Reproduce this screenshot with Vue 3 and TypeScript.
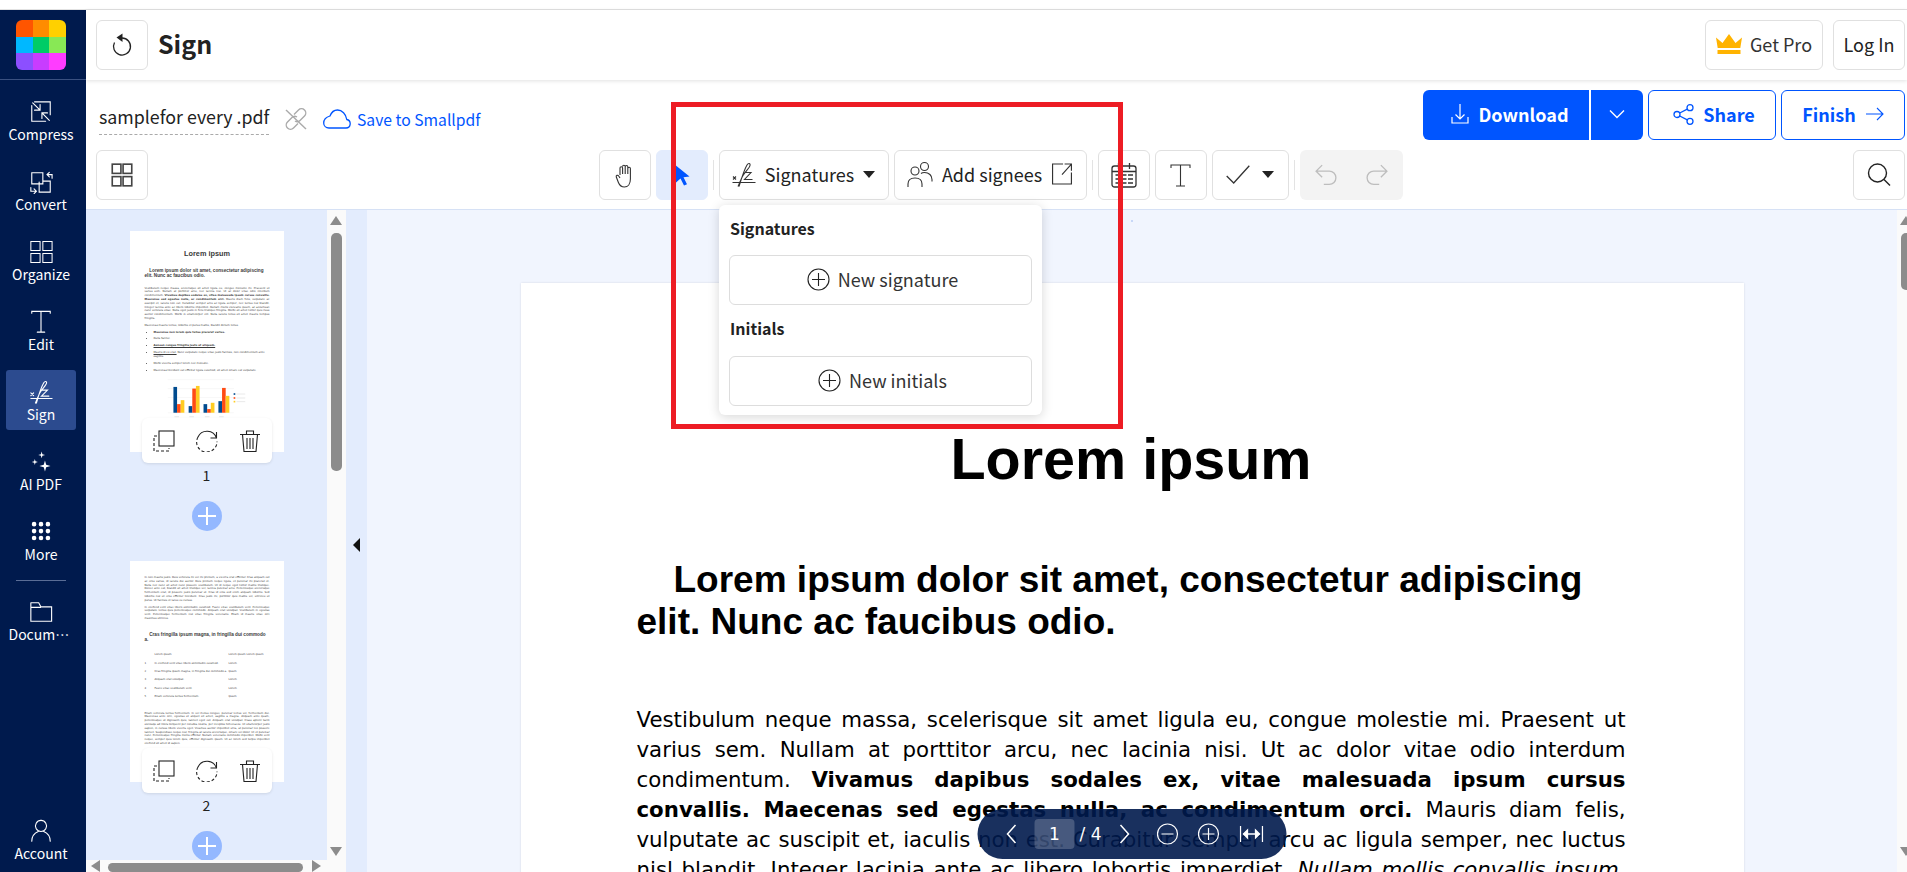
<template>
  <div class="app">
    <aside class="rail">
      <div class="logo-wrap">
        <div class="logo">
          <span v-for="c in logoColors" :key="c" :style="{ background: c }"></span>
        </div>
      </div>
      <nav class="rail-nav">
        <template v-for="item in railItems" :key="item.label">
          <div v-if="item.label === 'Documents'" class="rail-sep"></div>
          <div class="rail-item" :class="{ active: item.label === 'Sign', account: item.label === 'Account' }">
            <svg width="24" height="24" viewBox="0 0 24 26" fill="none" stroke="#fff" :stroke-width="item.sw || 1.2">
              <path :d="item.d" :fill="item.fill ? '#fff' : 'none'" :stroke="item.fill ? 'none' : '#fff'" stroke-linecap="round" />
            </svg>
            <span class="rail-label" :class="{ clipped: item.label === 'Documents' }">{{ item.label }}</span>
          </div>
        </template>
      </nav>
    </aside>

    <div class="main">
      <header class="header">
        <button class="btn square">
          <svg width="24" height="24" viewBox="0 0 24 24" fill="none" stroke="#222" stroke-width="1.300">
            <path d="M12 5a8.500 8.500 0 1 1-7.500 4.500" />
            <path d="M12.500.5 6.500 4.500l6 4.500z" fill="#222" stroke="none" />
          </svg>
        </button>
        <h1 class="title">Sign</h1>
        <div class="spacer"></div>
        <button class="btn pro">
          <svg width="26" height="20" viewBox="0 0 26 20" fill="#ffb300">
            <path d="M0 3.5 6.5 9 13 0l6.500 9L26 3.500 24.300 14H1.700z" />
            <rect x="1.500" y="16" width="23" height="4" />
          </svg>
          Get Pro
        </button>
        <button class="btn login">Log In</button>
      </header>

      <div class="actions">
        <span class="filename">samplefor every .pdf</span>
        <svg class="unlink" width="24" height="24" viewBox="0 0 24 24" fill="none" stroke="#aaa" stroke-width="1.400">
          <path d="M10 7.500 14.500 3a4 4 0 0 1 6 6l-4.500 4.500a4 4 0 0 1-5 .5" />
          <path d="M14 16.500 9.500 21a4 4 0 0 1-6-6L8 10.500a4 4 0 0 1 5-.5" />
          <path d="M2 3l20 19" />
        </svg>
        <svg class="cloud" width="28" height="20" viewBox="0 0 28 20" fill="none" stroke="#0055ff" stroke-width="1.300">
          <path d="M6 19h17a4.300 4.300 0 0 0 .8-8.500C23 5 19 1 14.500 1 11 1 8.500 3 7 7 3.500 8 .7 10.500.7 14c0 3 2.300 5 5.300 5z" />
        </svg>
        <span class="save">Save to Smallpdf</span>
        <div class="spacer"></div>
        <button class="btn primary download">
          <svg width="18" height="20" viewBox="0 0 18 20" fill="none" stroke="#fff" stroke-width="1.200">
            <path d="M9 0v15M4.500 10.500 9 15l4.500-4.500M1 13v6h16v-6" />
          </svg>
          Download
        </button>
        <button class="btn primary caret-btn">
          <svg width="16" height="10" viewBox="0 0 16 10" fill="none" stroke="#fff" stroke-width="1.400"><path d="m1 1.500 7 7 7-7" /></svg>
        </button>
        <button class="btn outline share">
          <svg width="21" height="21" viewBox="0 0 21 21" fill="none" stroke="#0055ff" stroke-width="1.300">
            <circle cx="4" cy="10.500" r="3" /><circle cx="17" cy="3.700" r="3" /><circle cx="17" cy="17.300" r="3" />
            <path d="m6.700 9 7.600-3.900M6.700 12l7.600 3.900" />
          </svg>
          Share
        </button>
        <button class="btn outline finish">
          Finish
          <svg width="18" height="14" viewBox="0 0 18 14" fill="none" stroke="#0055ff" stroke-width="1.100"><path d="M0 7h17M11 1l6 6-6 6" /></svg>
        </button>
      </div>

      <div class="toolbar">
        <button class="btn square">
          <svg width="22" height="26" viewBox="0 0 20 24" fill="none" stroke="#444" stroke-width="1.500">
            <rect x="1" y="2" width="8" height="8.500" /><rect x="11" y="2" width="8" height="8.500" />
            <rect x="1" y="13.500" width="8" height="8.500" /><rect x="11" y="13.500" width="8" height="8.500" />
          </svg>
        </button>
        <div class="tools">
          <button class="btn square">
            <svg width="20" height="25" viewBox="0 0 20 25" fill="none" stroke="#333" stroke-width="1.100">
              <path d="M5 12V5a1.300 1.300 0 0 1 2.600 0v6M7.600 3.500a1.300 1.300 0 0 1 2.600 0V11M10.200 3.800a1.300 1.300 0 0 1 2.600 0V11M12.800 5.500a1.300 1.300 0 0 1 2.600 0V16c0 5-2.500 8-6 8-3 0-4.800-1.500-6-4.500L1.300 14c-.6-1.500 1.500-2.500 2.400-1L5 15" />
            </svg>
          </button>
          <button class="btn square selected">
            <svg width="16" height="22" viewBox="0 0 16 22" fill="#0055ff"><path d="M0 0l15.500 12.500-6 .8 3.500 7-3 1.200-3.500-7L1.500 19z" /></svg>
          </button>
          <i class="tool-sep"></i>
          <button class="btn sigs">
            <svg width="24" height="25" viewBox="0 0 24 25" fill="none" stroke="#333" stroke-width="1.100">
              <path d="M1 14.500l3 3M4 14.500l-3 3M.5 20.500H23.500" />
              <path d="M7 24.500C9 18 12 8 15 3c1.200-2 3.500-2 3 .5-.5 2.500-5 6.500-7 10-1.500 2.500-3.500 7.500-5 11M13 10.500h6l-6.500 7h8" />
            </svg>
            Signatures
            <i class="tri"></i>
          </button>
          <button class="btn signees">
            <svg width="26" height="26" viewBox="0 0 26 26" fill="none" stroke="#333" stroke-width="1.100">
              <circle cx="8" cy="10" r="4" /><circle cx="17.500" cy="5.500" r="4" />
              <path d="M1 26v-3c0-4 3-6 7-6s7 2 7 6v3M14 12.500c1-.8 2-1 3.500-1 4.500 0 7.500 3 7.500 7v2" />
            </svg>
            Add signees
            <svg width="22" height="22" viewBox="0 0 20 21" fill="none" stroke="#333" stroke-width="1.100">
              <path d="M11 1H1v19h18V9M10 11l9-10M12.500 1H19v6.500" />
            </svg>
          </button>
          <i class="tool-sep"></i>
          <button class="btn square">
            <svg width="26" height="26" viewBox="0 0 26 26" fill="none" stroke="#333" stroke-width="1.300">
              <rect x="1" y="4" width="24" height="21" rx="2.500" />
              <path d="M7.500 1v6M18.500 1v6M1 9.500h24" />
              <path d="M4.500 13h5M11 13h4.500M17 13h5M4.500 17h5M11 17h4.500M17 17h5M4.500 21h5M11 21h4.500M17 21h5" stroke-width="1.700" />
            </svg>
          </button>
          <button class="btn square">
            <svg width="21" height="23" viewBox="0 0 21 23" fill="none" stroke="#333" stroke-width="1.100"><path d="M1 4V1h19v3M10.500 1v21M6 22h9" /></svg>
          </button>
          <button class="btn check">
            <svg width="24" height="19" viewBox="0 0 24 19" fill="none" stroke="#333" stroke-width="1.300"><path d="m.7 11 7 7L23.300.7" /></svg>
            <i class="tri"></i>
          </button>
          <i class="tool-sep"></i>
          <div class="history">
            <svg width="22" height="22" viewBox="0 0 20 20" fill="none" stroke="#bdbdbd" stroke-width="1.200"><path d="M6.500 1 1 6.500 6.500 12M1 6.500h12a6 6 0 0 1 0 12H8" /></svg>
            <svg width="22" height="22" viewBox="0 0 20 20" fill="none" stroke="#bdbdbd" stroke-width="1.200"><path d="M13.500 1 19 6.500 13.500 12M19 6.500H7a6 6 0 0 0 0 12h5" /></svg>
          </div>
        </div>
        <button class="btn square">
          <svg width="24" height="24" viewBox="0 0 24 24" fill="none" stroke="#222" stroke-width="1.400"><circle cx="10.500" cy="10" r="9" /><path d="m17 16.500 6 6" /></svg>
        </button>
      </div>

      <div class="workspace">
        <div class="thumbs">
          <div class="thumb-list">
            <div class="thumb-item">
              <div class="thumb">
                <div class="t-title">Lorem ipsum</div>
                <div class="t-h2"><span class="t-indent"></span>Lorem ipsum dolor sit amet, consectetur adipiscing elit. Nunc ac faucibus odio.</div>
                <p class="t-p t-first">Vestibulum neque massa, scelerisque sit amet ligula eu, congue molestie mi. Praesent ut varius sem. Nullam at porttitor arcu, nec lacinia nisi. Ut ac dolor vitae odio interdum condimentum. <b>Vivamus dapibus sodales ex, vitae malesuada ipsum cursus convallis. Maecenas sed egestas nulla, ac condimentum orci.</b> Mauris diam felis, vulputate ac suscipit et, iaculis non est. Curabitur semper arcu ac ligula semper, nec luctus nisl blandit. Integer lacinia ante ac libero lobortis imperdiet. <em>Nullam mollis convallis ipsum, ac accumsan nunc vehicula vitae.</em> Nulla eget justo in felis tristique fringilla. Morbi sit amet tortor quis risus auctor condimentum. Morbi in ullamcorper elit. Nulla iaculis tellus sit amet mauris tempus fringilla.</p>
                <p class="t-p">Maecenas mauris lectus, lobortis et purus mattis, blandit dictum tellus.</p>
                <ul class="t-list">
                  <li><b>Maecenas non lorem quis tellus placerat varius.</b></li>
                  <li><em>Nulla facilisi.</em></li>
                  <li><b><u>Aenean congue fringilla justo ut aliquam.</u></b></li>
                  <li><u>Mauris id ex erat.</u> Nunc vulputate neque vitae justo facilisis, non condimentum ante sagittis.</li>
                  <li>Morbi viverra semper lorem nec molestie.</li>
                  <li>Maecenas tincidunt est efficitur ligula euismod, sit amet ornare est vulputate.</li>
                </ul>
                <svg class="t-chart" width="87" height="43" viewBox="140 470 260 130">
                  <path d="M150 478h200M150 505h200M150 532h200M150 578h200" stroke="#f1f1f1" stroke-width="1.500" />
                  <template v-for="g in chartBars" :key="g.x">
                    <rect :x="g.x" :y="g.b" width="11" :height="578 - g.b" fill="#004b8f" />
                    <rect :x="g.x + 11" :y="g.o" width="11" :height="578 - g.o" fill="#ff4b14" />
                    <rect :x="g.x + 22" :y="g.y" width="11" :height="578 - g.y" fill="#ffcc22" />
                  </template>
                  <rect x="349" y="519" width="5" height="5" fill="#004b8f" /><rect x="349" y="531" width="5" height="5" fill="#ff4b14" /><rect x="349" y="542" width="5" height="5" fill="#ffcc22" />
                  <path d="M358 521.500h26M358 533.500h26M358 544.500h26M170 590h14M215 590h14M262 590h14M305 590h14" stroke="#ddd" stroke-width="2" />
                </svg>
                <div class="t-card">
                  <svg width="22" height="22" viewBox="0 0 22 22" fill="none" stroke="#222" stroke-width="1.100"><rect x="6" y="1" width="15" height="15" /><path d="M4 6H1v15h15v-3" stroke-dasharray="3 2" /></svg>
                  <svg width="22" height="22" viewBox="0 0 22 22" fill="none" stroke="#222" stroke-width="1.100"><path d="M20.500 8A10 10 0 0 0 2 7" /><path d="M2 7a10 10 0 0 0 14 13.500 10 10 0 0 0 5-9" stroke-dasharray="3 2.200" /><path d="M20.500 2v6h-6" /></svg>
                  <svg width="22" height="22" viewBox="0 0 22 22" fill="none" stroke="#222" stroke-width="1.100"><path d="M1 4.500h20M7.500 4.500V1h7v3.500M3.500 4.500 5 21.500h12l1.500-17M8 8v11M11 8v11M14 8v11" /></svg>
                </div>
              </div>
              <div class="t-num">1</div>
              <div class="t-add"><svg width="18" height="18" viewBox="0 0 18 18" stroke="#fff" stroke-width="2"><path d="M9 0v18M0 9h18" /></svg></div>
            </div>

            <div class="thumb-item">
              <div class="thumb second">
                <p class="t-p">In non mauris justo. Duis vehicula mi vel mi pretium, a viverra erat efficitur. Cras aliquam est ac eros varius, id iaculis dui auctor. Duis pretium neque ligula, et pulvinar mi placerat et. Nulla nec nunc sit amet nunc posuere vestibulum. Ut id neque eget tortor mattis tristique. Donec ante est, blandit sit amet tristique vel, lacinia pulvinar arcu. Pellentesque scelerisque fermentum erat, id posuere justo pulvinar ut. Cras id eros sed enim aliquam lobortis. Sed lobortis nisl ut eros efficitur tincidunt. Cras justo mi, porttitor quis mattis vel, ultricies ut purus. Ut facilisis et lacus eu cursus.</p>
                <p class="t-p">In eleifend velit vitae libero sollicitudin euismod. Fusce vitae vestibulum velit. Pellentesque vulputate lectus quis pellentesque commodo. Aliquam erat volutpat. Vestibulum in egestas velit. Pellentesque fermentum nisl vitae fringilla venenatis. Etiam id mauris vitae orci maximus ultricies.</p>
                <div class="t-h3"><span class="t-indent"></span>Cras fringilla ipsum magna, in fringilla dui commodo a.</div>
                <div class="t-table">
                  <template v-for="row in tableRows" :key="row[0] + row[1]">
                    <span>{{ row[0] }}</span><span>{{ row[1] }}</span><span>{{ row[2] }}</span>
                  </template>
                </div>
                <p class="t-p">Etiam vehicula luctus fermentum. In vel metus congue, pulvinar lectus vel, fermentum dui. Maecenas ante orci, egestas ut aliquet sit amet, sagittis a magna. Aliquam ante quam, pellentesque ut dignissim quis, laoreet eget est. Aliquam erat volutpat. Class aptent taciti sociosqu ad litora torquent per conubia nostra, per inceptos himenaeos. Ut ullamcorper justo sapien, in cursus libero viverra eget. Vivamus auctor imperdiet urna, at pulvinar leo posuere laoreet. Suspendisse neque nisl, fringilla at iaculis scelerisque, ornare vel dolor. Ut et pulvinar nunc. Pellentesque fringilla mollis efficitur. Nullam venenatis commodo imperdiet. Morbi velit neque, semper quis lorem quis, efficitur dignissim ipsum. Ut ac lorem sed turpis imperdiet eleifend sit amet id sapien.</p>
                <div class="t-card">
                  <svg width="22" height="22" viewBox="0 0 22 22" fill="none" stroke="#222" stroke-width="1.100"><rect x="6" y="1" width="15" height="15" /><path d="M4 6H1v15h15v-3" stroke-dasharray="3 2" /></svg>
                  <svg width="22" height="22" viewBox="0 0 22 22" fill="none" stroke="#222" stroke-width="1.100"><path d="M20.500 8A10 10 0 0 0 2 7" /><path d="M2 7a10 10 0 0 0 14 13.500 10 10 0 0 0 5-9" stroke-dasharray="3 2.200" /><path d="M20.500 2v6h-6" /></svg>
                  <svg width="22" height="22" viewBox="0 0 22 22" fill="none" stroke="#222" stroke-width="1.100"><path d="M1 4.500h20M7.500 4.500V1h7v3.500M3.500 4.500 5 21.500h12l1.500-17M8 8v11M11 8v11M14 8v11" /></svg>
                </div>
              </div>
              <div class="t-num">2</div>
              <div class="t-add"><svg width="18" height="18" viewBox="0 0 18 18" stroke="#fff" stroke-width="2"><path d="M9 0v18M0 9h18" /></svg></div>
            </div>
          </div>
          <div class="hbar">
            <i class="arr left"></i>
            <div class="hthumb"></div>
            <i class="arr right"></i>
          </div>
        </div>

        <div class="vbar">
          <i class="arr up"></i>
          <div class="vthumb"></div>
          <i class="arr down"></i>
        </div>

        <div class="gutter"><i class="collapse"></i></div>

        <div class="viewer">
          <div class="dot"></div>
          <div class="page">
            <div class="doc-title">Lorem ipsum</div>
            <div class="doc-h2">Lorem ipsum dolor sit amet, consectetur adipiscing elit. Nunc ac faucibus odio.</div>
            <p class="doc-p">Vestibulum neque massa, scelerisque sit amet ligula eu, congue molestie mi. Praesent ut varius sem. Nullam at porttitor arcu, nec lacinia nisi. Ut ac dolor vitae odio interdum condimentum. <b>Vivamus dapibus sodales ex, vitae malesuada ipsum cursus convallis. Maecenas sed egestas nulla, ac condimentum orci.</b> Mauris diam felis, vulputate ac suscipit et, iaculis non est. Curabitur semper arcu ac ligula semper, nec luctus nisl blandit. Integer lacinia ante ac libero lobortis imperdiet. <em>Nullam mollis convallis ipsum, ac accumsan nunc vehicula vitae.</em> Nulla eget justo in felis tristique fringilla.</p>
          </div>
          <div class="pager">
            <svg width="12" height="20" viewBox="0 0 12 20" fill="none" stroke="#fff" stroke-width="1.500"><path d="M10 1 2 10l8 9" /></svg>
            <span class="page-box">1</span>
            <span class="page-total">/ 4</span>
            <svg class="next" width="12" height="20" viewBox="0 0 12 20" fill="none" stroke="#fff" stroke-width="1.500"><path d="m2 1 8 9-8 9" /></svg>
            <svg class="zoom-out" width="22" height="22" viewBox="0 0 22 22" fill="none" stroke="#fff" stroke-width="1.200"><circle cx="11" cy="11" r="10" /><path d="M5 11h12" /></svg>
            <svg class="zoom-in" width="22" height="22" viewBox="0 0 22 22" fill="none" stroke="#fff" stroke-width="1.200"><circle cx="11" cy="11" r="10" /><path d="M5 11h12M11 5v12" /></svg>
            <svg width="24" height="16" viewBox="0 0 24 16" fill="none" stroke="#fff" stroke-width="1.300"><path d="M1 0v16M23 0v16M4 8h16" /><path d="M8 4 4 8l4 4zM16 4l4 4-4 4z" fill="#fff" /></svg>
          </div>
        </div>
        <div class="rbar">
          <i class="arr up"></i>
          <div class="rthumb"></div>
          <i class="arr down"></i>
        </div>
      </div>

      <div class="dropdown">
        <div class="dd-head">Signatures</div>
        <button class="btn dd-btn">
          <svg width="23" height="23" viewBox="0 0 23 23" fill="none" stroke="#222" stroke-width="1.100"><circle cx="11.500" cy="11.500" r="10.500" /><path d="M5 11.500h13M11.500 5v13" /></svg>
          New signature
        </button>
        <div class="dd-head">Initials</div>
        <button class="btn dd-btn">
          <svg width="23" height="23" viewBox="0 0 23 23" fill="none" stroke="#222" stroke-width="1.100"><circle cx="11.500" cy="11.500" r="10.500" /><path d="M5 11.500h13M11.500 5v13" /></svg>
          New initials
        </button>
      </div>
    </div>

    <div class="annotation"></div>
  </div>
</template>

<script setup lang="ts">
interface RailItem {
  label: string
  d: string
  fill?: boolean
  sw?: number
}

const logoColors = ['#ff5500', '#ff8c00', '#ffd000', '#00b8ff', '#00cc66', '#88e855', '#8c4fff', '#c83cff', '#ff3cff']

const railItems: RailItem[] = [
  { label: 'Compress', d: 'M5 2H22V16M2 6V23H17M3 3l8 8M11 5v6H5M21 22l-8-8M13 20v-6h6' },
  { label: 'Convert', d: 'M2 3h12v12H2zM10 13v11h12V12h-8M24 9V5h-5M21 2.500 18.500 5 21 7.500M1 19v4h6M4.500 20.500 7 23l-2.500 2.500' },
  { label: 'Organize', d: 'M1 1.500h10v10H1zM14 1.500h10v10H14zM1 14.500h10v10H1zM14 14.500h10v10H14z', sw: 1.100 },
  { label: 'Edit', d: 'M2 3.500V1.500H22V3.500M12 1.500V24M8 24H16' },
  { label: 'Sign', d: 'M1 14l3 3M4 14l-3 3M1 20H24M7 25C9 18 12 8 15 3c1.200-2 3.500-2 3 .5-.5 2.500-5 6.500-7 10-1.500 2.500-3.500 8-5 11.500M13 11h6l-6.500 6.500h8' },
  { label: 'AI PDF', d: 'M12.700 1.600L13.500 4.500 16.400 5.300 13.500 6.100 12.700 9 11.900 6.100 9 5.300 11.900 4.500zM5.300 9.700L6 12.300 8.600 13 6 13.700 5.300 16.300 4.600 13.700 2 13 4.600 12.300zM16.300 11.300L17.600 16 22.300 17.300 17.600 18.600 16.300 23.300 15 18.600 10.300 17.300 15 16z', fill: true },
  { label: 'More', d: 'M4.500 4.500h.01M12 4.500h.01M19.500 4.500h.01M4.500 12h.01M12 12h.01M19.500 12h.01M4.500 19.500h.01M12 19.500h.01M19.500 19.500h.01', sw: 5 },
  { label: 'Documents', d: 'M1 3V23H23.500V7.500H12L9.500 3H1M1 8H11.500' },
  { label: 'Account', d: 'M12 1.500a6 6 0 1 0 .01 0M2 24c0-6 3.500-9 7-10.500M22 24c0-6-3.500-9-7-10.500' }
]

const chartBars = [
  { x: 167, b: 500, o: 552, y: 540 },
  { x: 213, b: 558, o: 505, y: 497 },
  { x: 258, b: 552, o: 567, y: 548 },
  { x: 303, b: 543, o: 503, y: 527 }
]

const tableRows = [
  ['', 'Lorem ipsum', 'Lorem ipsum Lorem ipsum'],
  ['1', 'In eleifend velit vitae libero sollicitudin euismod.', 'Lorem'],
  ['2', 'Cras fringilla ipsum magna, in fringilla dui commodo a.', 'Ipsum'],
  ['3', 'Aliquam erat volutpat.', 'Lorem'],
  ['4', 'Fusce vitae vestibulum velit.', 'Lorem'],
  ['5', 'Etiam vehicula luctus fermentum.', 'Ipsum']
]
</script>

<style>
html,
body {
  margin: 0;
  background: #fff;
  overflow: hidden;
}
</style>

<style scoped>
* {
  box-sizing: border-box;
}

.app {
  position: relative;
  display: flex;
  width: 1907px;
  height: 872px;
  padding-top: 10px;
  overflow: hidden;
  background: #fff;
  font-family: "Noto Sans CJK SC", "Noto Sans", sans-serif;
  color: #222;
}

.app::before {
  content: "";
  position: absolute;
  top: 9px;
  left: 0;
  right: 0;
  height: 1px;
  background: #e2e2e2;
}

/* left rail */
.rail {
  flex: 0 0 86px;
  display: flex;
  flex-direction: column;
  background: #001a4d;
}

.logo-wrap {
  height: 70px;
  padding: 10px 16px;
  border-bottom: 1px solid #3a5080;
}

.logo {
  display: grid;
  grid-template-columns: repeat(3, 1fr);
  grid-template-rows: repeat(3, 1fr);
  width: 50px;
  height: 50px;
  border-radius: 6px;
  overflow: hidden;
}

.rail-nav {
  flex: 1;
  display: flex;
  flex-direction: column;
  gap: 10px;
  padding: 10px 10px 3px 6px;
}

.rail-item {
  width: 70px;
  height: 60px;
  padding-top: 10px;
  flex: none;
  display: flex;
  flex-direction: column;
  align-items: center;
  border-radius: 3px;
  color: #fff;
}

.rail-item.active {
  background: #2c4b8f;
}

.rail-item.account {
  margin-top: auto;
}

.rail-label {
  width: 70px;
  height: 20px;
  font-size: 14px;
  line-height: 20px;
  text-align: center;
  white-space: nowrap;
  overflow: hidden;
  text-overflow: ellipsis;
}

.rail-label.clipped {
  width: 62px;
  margin-right: 3px;
}

.rail-sep {
  flex: none;
  width: 50px;
  height: 1px;
  margin: 0 0 -1px 10px;
  background: #5a6d96;
}

/* shared buttons */
.btn {
  display: flex;
  align-items: center;
  justify-content: center;
  flex: none;
  height: 50px;
  padding: 0 0 2px;
  border: 1px solid #e0e0e0;
  border-radius: 6px;
  background: #fff;
  color: #222;
  font-family: inherit;
  font-size: 18px;
}

.square {
  width: 52px;
  padding: 0;
}

.spacer {
  flex: 1;
}

.main {
  flex: 1;
  min-width: 0;
  display: flex;
  flex-direction: column;
  position: relative;
}

.header {
  flex: none;
  display: flex;
  align-items: center;
  gap: 10px;
  height: 70px;
  padding: 0 2px 0 10px;
  box-shadow: 0 1px 4px rgba(0, 0, 0, 0.12);
}

.title {
  margin: 0 0 4px;
  font-size: 25px;
  font-weight: 700;
  color: #222;
}

.pro {
  width: 118px;
  gap: 8px;
  color: #333;
}

.login {
  width: 72px;
}

.actions {
  flex: none;
  display: flex;
  align-items: center;
  height: 50px;
  margin-top: 10px;
  padding: 0 2px 0 13px;
}

.filename {
  width: 170px;
  height: 34px;
  margin-top: 6px;
  border-bottom: 1px dashed #aaa;
  font-size: 17.800px;
  line-height: 31px;
  white-space: nowrap;
}

.unlink,
.cloud,
.save {
  margin-top: 8px;
}

.unlink {
  margin-left: 15px;
}

.cloud {
  margin-left: 15px;
}

.save {
  margin-left: 6px;
  font-size: 15.700px;
  color: #0055ff;
}

.primary {
  border: none;
  background: #0055ff;
  color: #fff;
  font-weight: 700;
}

.download {
  width: 166px;
  gap: 10px;
  padding-left: 7px;
  border-radius: 6px 0 0 6px;
}

.caret-btn {
  width: 52px;
  margin-left: 2px;
  border-radius: 0 6px 6px 0;
}

.outline {
  border: 1px solid #0055ff;
  color: #0055ff;
  font-weight: 700;
}

.share {
  width: 128px;
  gap: 9px;
  padding-left: 4px;
  margin-left: 5px;
}

.finish {
  width: 124px;
  gap: 10px;
  margin-left: 5px;
}

.toolbar {
  flex: none;
  display: flex;
  justify-content: space-between;
  height: 60px;
  margin-top: 10px;
  padding: 0 2px 9px 10px;
  border-bottom: 1px solid #d6e1f5;
}

.tools {
  display: flex;
  align-items: center;
  gap: 5px;
}

.selected {
  border-color: #e3ecfd;
  background: #e3ecfd;
}

.tool-sep {
  width: 1px;
  height: 30px;
  background: #e3e3e3;
}

.sigs {
  width: 170px;
  gap: 9px;
}

.signees {
  width: 193px;
  gap: 9px;
}

.check {
  width: 77px;
  gap: 12px;
}

.tri {
  width: 0;
  height: 0;
  border: 6px solid transparent;
  border-top: 7px solid #222;
  border-bottom: none;
}

.history {
  display: flex;
  align-items: center;
  justify-content: space-between;
  width: 103px;
  height: 50px;
  padding: 0 15px;
  border-radius: 6px;
  background: #f3f3f3;
}

/* dropdown */
.dropdown {
  position: absolute;
  top: 195px;
  left: 633px;
  width: 323px;
  height: 210px;
  padding: 0 10px;
  border-radius: 6px;
  background: #fff;
  box-shadow: 0 2px 12px rgba(0, 0, 0, 0.16);
  z-index: 5;
}

.dd-head {
  height: 50px;
  padding-left: 1px;
  font-size: 16px;
  font-weight: 700;
  line-height: 47px;
}

.dd-btn {
  width: 303px;
  gap: 8px;
  padding-left: 4px;
  border-color: #ddd;
  color: #333;
}

.dd-head:nth-child(3) {
  height: 51px;
  line-height: 47px;
}

.annotation {
  position: absolute;
  left: 671px;
  top: 102px;
  width: 452px;
  height: 327px;
  border: 5px solid #ed1c24;
  z-index: 6;
}

/* workspace */
.workspace {
  flex: 1;
  min-height: 0;
  display: flex;
  overflow: hidden;
}

.thumbs {
  flex: 0 0 241px;
  display: flex;
  flex-direction: column;
  background: #e3ecfd;
}

.thumb-list {
  flex: 1;
  min-height: 0;
  overflow: hidden;
  padding-top: 21px;
}

.thumb-item {
  display: flex;
  flex-direction: column;
  align-items: center;
}

.thumb {
  position: relative;
  width: 154px;
  height: 221px;
  flex: none;
  padding: 18px 14px 0 15px;
  background: #fff;
  font-family: "DejaVu Sans", sans-serif;
  font-size: 2.650px;
  line-height: 3.800px;
  color: #3a3a3a;
}

.thumb.second {
  padding-top: 15px;
}

.t-title {
  font-family: "Liberation Sans", sans-serif;
  font-size: 7.300px;
  font-weight: 700;
  line-height: 9px;
  text-align: center;
}

.t-h2,
.t-h3 {
  font-family: "Liberation Sans", sans-serif;
  font-size: 4.680px;
  font-weight: 700;
  line-height: 5.300px;
}

.t-h2 {
  margin-top: 10px;
}

.t-h3 {
  margin: 11px 0 11px;
}

.t-indent {
  display: inline-block;
  width: 4.700px;
}

.t-p {
  margin: 0 0 3px;
  text-align: justify;
}

.t-first {
  margin-top: 8px;
}

.t-list {
  margin: 0;
  padding: 0 0 0 9px;
}

.t-list li {
  margin-bottom: 3.100px;
}

.t-chart {
  position: absolute;
  left: 34px;
  top: 146px;
}

.t-table {
  display: grid;
  grid-template-columns: 10px 74px 41px;
  row-gap: 4.500px;
  margin-bottom: 13px;
}

.t-card {
  position: absolute;
  left: 12px;
  top: 187px;
  display: flex;
  align-items: center;
  justify-content: center;
  gap: 21px;
  width: 130px;
  height: 45px;
  border-radius: 6px;
  background: #fff;
  box-shadow: 0 1px 3px rgba(0, 0, 0, 0.1);
}

.t-num {
  flex: none;
  height: 22px;
  margin-top: 12px;
  font-size: 14px;
  line-height: 22px;
  color: #222;
}

.t-add {
  flex: none;
  display: flex;
  align-items: center;
  justify-content: center;
  width: 30px;
  height: 30px;
  margin: 15px 0 30px;
  border-radius: 50%;
  background: #94b8ff;
}

.hbar {
  position: relative;
  flex: 0 0 12px;
  background: #fafafa;
}

.hthumb {
  position: absolute;
  left: 22px;
  top: 3px;
  width: 195px;
  height: 9px;
  border-radius: 5px;
  background: #8c8c8c;
}

.vbar,
.rbar {
  position: relative;
  background: #fafafa;
}

.vbar {
  flex: 0 0 19px;
}

.rbar {
  flex: 0 0 10px;
}

.vthumb {
  position: absolute;
  left: 4px;
  top: 23px;
  width: 11px;
  height: 238px;
  border-radius: 5px;
  background: #8c8c8c;
}

.rthumb {
  position: absolute;
  left: 4px;
  top: 23px;
  width: 11px;
  height: 57px;
  border-radius: 5px;
  background: #8c8c8c;
}

.arr {
  position: absolute;
  width: 0;
  height: 0;
  border: 6px solid transparent;
}

.arr.up {
  top: 6px;
  left: 3px;
  border-top: none;
  border-bottom: 9px solid #8c8c8c;
}

.arr.down {
  bottom: 16px;
  left: 3px;
  border-bottom: none;
  border-top: 9px solid #8c8c8c;
}

.arr.left {
  left: 5px;
  top: 0;
  border-left: none;
  border-right: 9px solid #8c8c8c;
}

.arr.right {
  left: 226px;
  top: 0;
  border-right: none;
  border-left: 9px solid #8c8c8c;
}

.gutter {
  flex: 0 0 21px;
  position: relative;
  background: #e3ecfd;
}

.collapse {
  position: absolute;
  left: 7px;
  top: 328px;
  width: 0;
  height: 0;
  border: 7px solid transparent;
  border-left: none;
  border-right: 7px solid #111;
}

.viewer {
  flex: 1;
  min-width: 0;
  position: relative;
  padding-top: 73px;
  background: #f1f5fe;
}

.dot {
  position: absolute;
  top: 10px;
  left: 764px;
  width: 2px;
  height: 2px;
  background: #c8d8f8;
}

.page {
  width: 1223px;
  height: 900px;
  margin: 0 auto;
  padding: 0 118px 0 116px;
  background: #fff;
  box-shadow: 0 0 2px rgba(0, 0, 50, 0.12);
  color: #000;
}

.doc-title {
  padding-top: 141px;
  font-family: "Liberation Sans", sans-serif;
  font-size: 57.500px;
  font-weight: 700;
  line-height: 70px;
  text-align: center;
}

.doc-h2 {
  margin-top: 65px;
  font-family: "Liberation Sans", sans-serif;
  font-size: 37px;
  font-weight: 700;
  line-height: 42px;
  text-indent: 37px;
}

.doc-p {
  margin: 62px 0 0;
  font-family: "DejaVu Sans", sans-serif;
  font-size: 21.300px;
  line-height: 30px;
  text-align: justify;
}

.pager {
  position: absolute;
  left: 50%;
  bottom: 13px;
  transform: translateX(-50%);
  display: flex;
  align-items: center;
  width: 309px;
  height: 50px;
  padding-left: 28px;
  border-radius: 25px;
  background: rgba(0, 26, 77, 0.9);
  color: #fff;
  font-family: "DejaVu Sans", sans-serif;
  font-size: 17px;
  gap: 20px;
}

.page-box {
  width: 40px;
  height: 30px;
  margin: 0 -3px 0 -3px;
  border-radius: 4px;
  background: rgba(255, 255, 255, 0.2);
  line-height: 30px;
  text-align: center;
}

.page-total {
  margin-left: -12px;
  white-space: nowrap;
}

.next {
  margin-left: -3px;
}

.zoom-out {
  margin-left: 6px;
}

.zoom-in {
  margin-left: -1px;
}
</style>
